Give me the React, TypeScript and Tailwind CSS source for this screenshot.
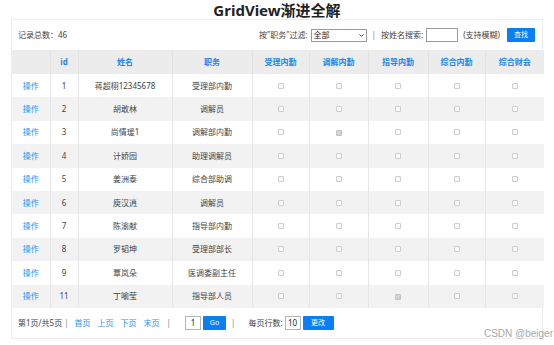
import { ChevronDownIcon } from "lucide-react";

type Row = { id: number; name: string; job: string; checks: boolean[] };

const rows: Row[] = [
  { id: 1, name: "蒋超栩12345678", job: "受理部内勤", checks: [false, false, false, false, false] },
  { id: 2, name: "胡敢林", job: "调解员", checks: [false, false, false, false, false] },
  { id: 3, name: "尚情瑗1", job: "调解部内勤", checks: [false, true, false, false, false] },
  { id: 4, name: "计娇园", job: "助理调解员", checks: [false, false, false, false, false] },
  { id: 5, name: "姜洲泰", job: "综合部助调", checks: [false, false, false, false, false] },
  { id: 6, name: "庾汉逍", job: "调解员", checks: [false, false, false, false, false] },
  { id: 7, name: "陈渝献", job: "指导部内勤", checks: [false, false, false, false, false] },
  { id: 8, name: "罗韬坤", job: "受理部部长", checks: [false, false, false, false, false] },
  { id: 9, name: "覃岚朵", job: "医调委副主任", checks: [false, false, false, false, false] },
  { id: 11, name: "丁喻莹", job: "指导部人员", checks: [false, false, true, false, false] },
];

const columns = ["", "id", "姓名", "职务", "受理内勤", "调解内勤", "指导内勤", "综合内勤", "综合财会"];
const widths = [38, 28, 94, 80, 57, 59, 60, 57, 59];

function Box(props: { checked: boolean }) {
  return (
    <span
      className={
        props.checked
          ? "inline-flex h-[6px] w-[6px] items-center justify-center rounded-[1px] border border-[#c4c4c4] bg-[#cfcfcf]"
          : "inline-block h-[6px] w-[6px] rounded-[1px] border border-[#cdcdcd] bg-[#fafafa]"
      }
    >
      {props.checked ? (
        <svg viewBox="0 0 6 6" className="h-[5px] w-[5px]">
          <path d="M1 3.2 L2.4 4.5 L5 1.5" fill="none" stroke="#f5f5f5" strokeWidth="1" />
        </svg>
      ) : null}
    </span>
  );
}

function Sep() {
  return <span className="text-[#888]">|</span>;
}

export default function App() {
  return (
    <div
      className="relative h-[345px] w-[554px] overflow-hidden bg-white text-[8px] text-[#444]"
      style={{ fontFamily: '"Noto Sans", "Noto Sans CJK SC", sans-serif' }}
    >
      <h1 className="h-[19px] pt-[1px] text-center text-[15px] leading-[18px] font-bold text-[#222]">GridView渐进全解</h1>
      <div className="ml-[11px] w-[532px] border border-[#ececec]">
        <div className="flex h-[30px] items-center justify-between pr-[7px] pl-[6px]">
          <span>记录总数：46</span>
          <div className="flex items-center">
            <span>按"职务"过滤:</span>
            <div className="ml-[3px] flex h-[13px] w-[56px] items-center justify-between border border-[#9a9a9a] bg-white pr-[1px] pl-[2px] text-[#222]">
              <span>全部</span>
              <ChevronDownIcon className="size-[7px] text-[#333]" strokeWidth={3} />
            </div>
            <span className="mx-[5px]">
              <Sep />
            </span>
            <span>按姓名搜索:</span>
            <span className="ml-[3px] h-[14px] w-[32px] border border-[#9a9a9a] bg-white" />
            <span className="ml-[5px]">(支持模糊)</span>
            <button className="ml-[7px] h-[14px] w-[28px] rounded-[1px] bg-[#0a7ff5] text-[7px] text-white">查找</button>
          </div>
        </div>
        <table className="w-full table-fixed border-collapse">
          <colgroup>
            {widths.map((w, i) => (
              <col key={i} style={{ width: w }} />
            ))}
          </colgroup>
          <thead>
            <tr className="h-[24px] bg-[#ececec]">
              {columns.map((c, i) => (
                <th key={i} className="border-l border-[#e2e2e2] p-0 text-center font-bold text-[#1c86ee] first:border-l-0">
                  {c}
                </th>
              ))}
            </tr>
          </thead>
          <tbody>
            {rows.map((r, idx) => (
              <tr key={r.id} className={idx % 2 === 0 ? "h-[23.4px] bg-white" : "h-[23.4px] bg-[#f2f2f2]"}>
                <td className="p-0 text-center text-[#2f8ff0]">操作</td>
                <td className="border-l border-[#e6e6e6] p-0 text-center">{r.id}</td>
                <td className="border-l border-[#e6e6e6] p-0 text-center">{r.name}</td>
                <td className="border-l border-[#e6e6e6] p-0 text-center">{r.job}</td>
                {r.checks.map((c, i) => (
                  <td key={i} className="border-l border-[#e6e6e6] p-0 text-center leading-none">
                    <Box checked={c} />
                  </td>
                ))}
              </tr>
            ))}
          </tbody>
        </table>
        <div className="flex h-[30px] items-center pl-[6px]">
          <span>第1页/共5页</span>
          <span className="ml-[2px]">
            <Sep />
          </span>
          <span className="ml-[6px] text-[#2f8ff0]">首页</span>
          <span className="ml-[7px] text-[#2f8ff0]">上页</span>
          <span className="ml-[7px] text-[#2f8ff0]">下页</span>
          <span className="ml-[7px] text-[#2f8ff0]">末页</span>
          <span className="ml-[7px]">
            <Sep />
          </span>
          <span className="ml-[14px] flex h-[14px] w-[16px] items-center justify-center border border-[#b5b5b5] bg-white text-[#222]">1</span>
          <button className="ml-[2px] h-[14px] w-[23px] rounded-[1px] bg-[#0a7ff5] text-[7px] text-white">Go</button>
          <span className="ml-[5px]">
            <Sep />
          </span>
          <span className="ml-[13px]">每页行数:</span>
          <span className="ml-[2px] flex h-[14px] w-[16px] items-center justify-center border border-[#b5b5b5] bg-white text-[#222]">10</span>
          <button className="ml-[2px] h-[14px] w-[31px] rounded-[1px] bg-[#0a7ff5] text-[7px] text-white">更改</button>
        </div>
      </div>
      <span
        className="absolute right-[1px] bottom-[4px] text-[10px] text-[#a8a8a8]"
        style={{ fontFamily: '"Liberation Sans", "Noto Sans", sans-serif' }}
      >
        CSDN @beiger
      </span>
    </div>
  );
}
